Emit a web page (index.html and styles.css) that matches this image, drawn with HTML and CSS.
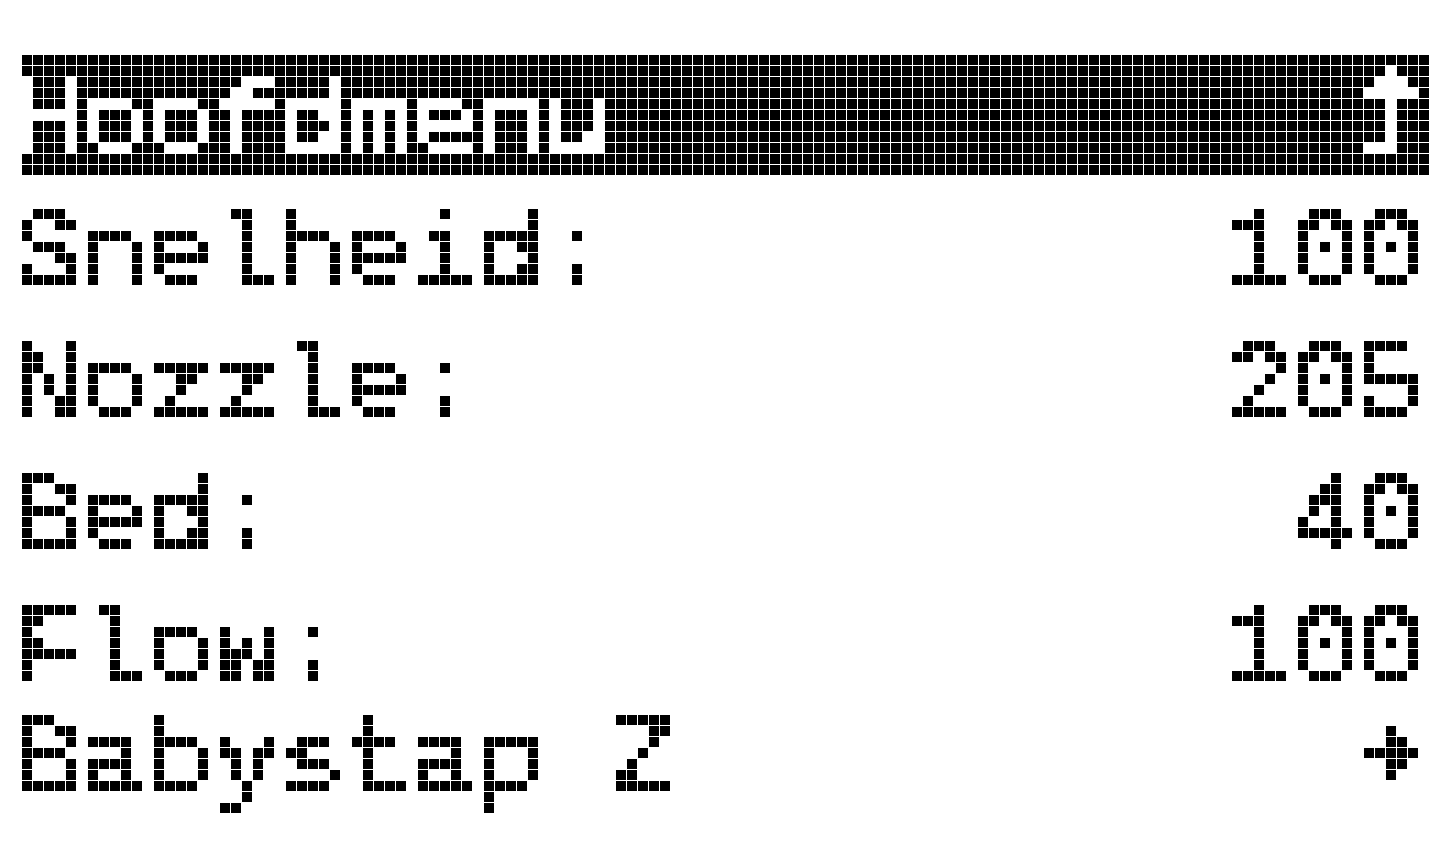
FILE: index.html
```html
<!DOCTYPE html>
<html lang="nl">
<head>
<meta charset="utf-8">
<title>Hoofdmenu</title>
<link rel="stylesheet" href="styles.css">
</head>
<body>
<svg class="defs" aria-hidden="true">
  <!-- samples the text once per 11px cell and grows each sample to a full cell -->
  <filter id="cells" x="0" y="0" width="1" height="1" color-interpolation-filters="sRGB">
    <feFlood x="5" y="5" width="1" height="1" flood-color="#000" result="dot"/>
    <feComposite in="dot" in2="dot" operator="over" x="0" y="0" width="11" height="11"/>
    <feTile result="grid"/>
    <feGaussianBlur in="SourceGraphic" stdDeviation="1 3" result="soft"/>
    <feComposite in="soft" in2="grid" operator="in"/>
    <feMorphology operator="dilate" radius="5"/>
    <feComponentTransfer><feFuncA type="discrete" tableValues="0 0 1 1 1"/></feComponentTransfer>
  </filter>
</svg>
<main class="lcd">
  <a class="title" href="#"><span class="text">Hoofdmenu</span>
    <svg class="icon" viewBox="0 0 5 8" aria-hidden="true"><path d="M2 0h1v1h1v1h1v1h-2v5h-3v-1h2v-4h-2v-1h1v-1h1z"/></svg>
  </a>
  <dl class="menu">
    <div class="row"><dt class="text">Snelheid:</dt><dd class="text value">100</dd></div>
    <div class="row"><dt class="text">Nozzle:</dt><dd class="text value">205</dd></div>
    <div class="row"><dt class="text">Bed:</dt><dd class="text value">40</dd></div>
    <div class="row"><dt class="text">Flow:</dt><dd class="text value">100</dd></div>
  </dl>
  <a class="row link" href="#"><span class="text">Babystap Z</span>
    <svg class="icon arrow" viewBox="0 0 5 5" aria-hidden="true"><path d="M2 0h1v1h1v1h1v1h-1v1h-1v1h-1v-2h-2v-1h2z"/></svg>
  </a>
</main>
</body>
</html>
```
FILE: styles.css
```css
* { box-sizing: border-box; }
body { margin: 0; background: #fff; color: #000; }
.defs { position: absolute; width: 0; height: 0; }
.lcd {
  position: relative;
  padding: 55px 22px 22px;
  min-height: 100vh;
  font: 110px/142px "Liberation Mono", monospace;
}
/* pixel gaps of the dot-matrix panel */
.lcd::after {
  content: "";
  position: absolute;
  inset: 0;
  pointer-events: none;
  background:
    repeating-linear-gradient(to right, transparent 0 10px, #fff 10px 11px),
    repeating-linear-gradient(to bottom, transparent 0 10px, #fff 10px 11px);
}
.title, .row {
  display: flex;
  justify-content: space-between;
  align-items: flex-start;
  color: inherit;
  text-decoration: none;
  height: 132px;
  padding-right: 11px;
}
.title { background: #000; color: #fff; height: 121px; }
.menu { margin: 11px 0 0; }
.text {
  height: 132px;
  margin: 0;
  white-space: pre;
  text-indent: -6px;
  -webkit-text-stroke: 2px currentColor;
  filter: url(#cells);
}
.value { margin-right: -5px; line-height: 140px; }
.icon { width: 55px; height: 88px; margin-top: 11px; fill: currentColor; shape-rendering: crispEdges; }
.arrow { height: 55px; margin-top: 33px; }
.link { margin-top: -22px; }
```
